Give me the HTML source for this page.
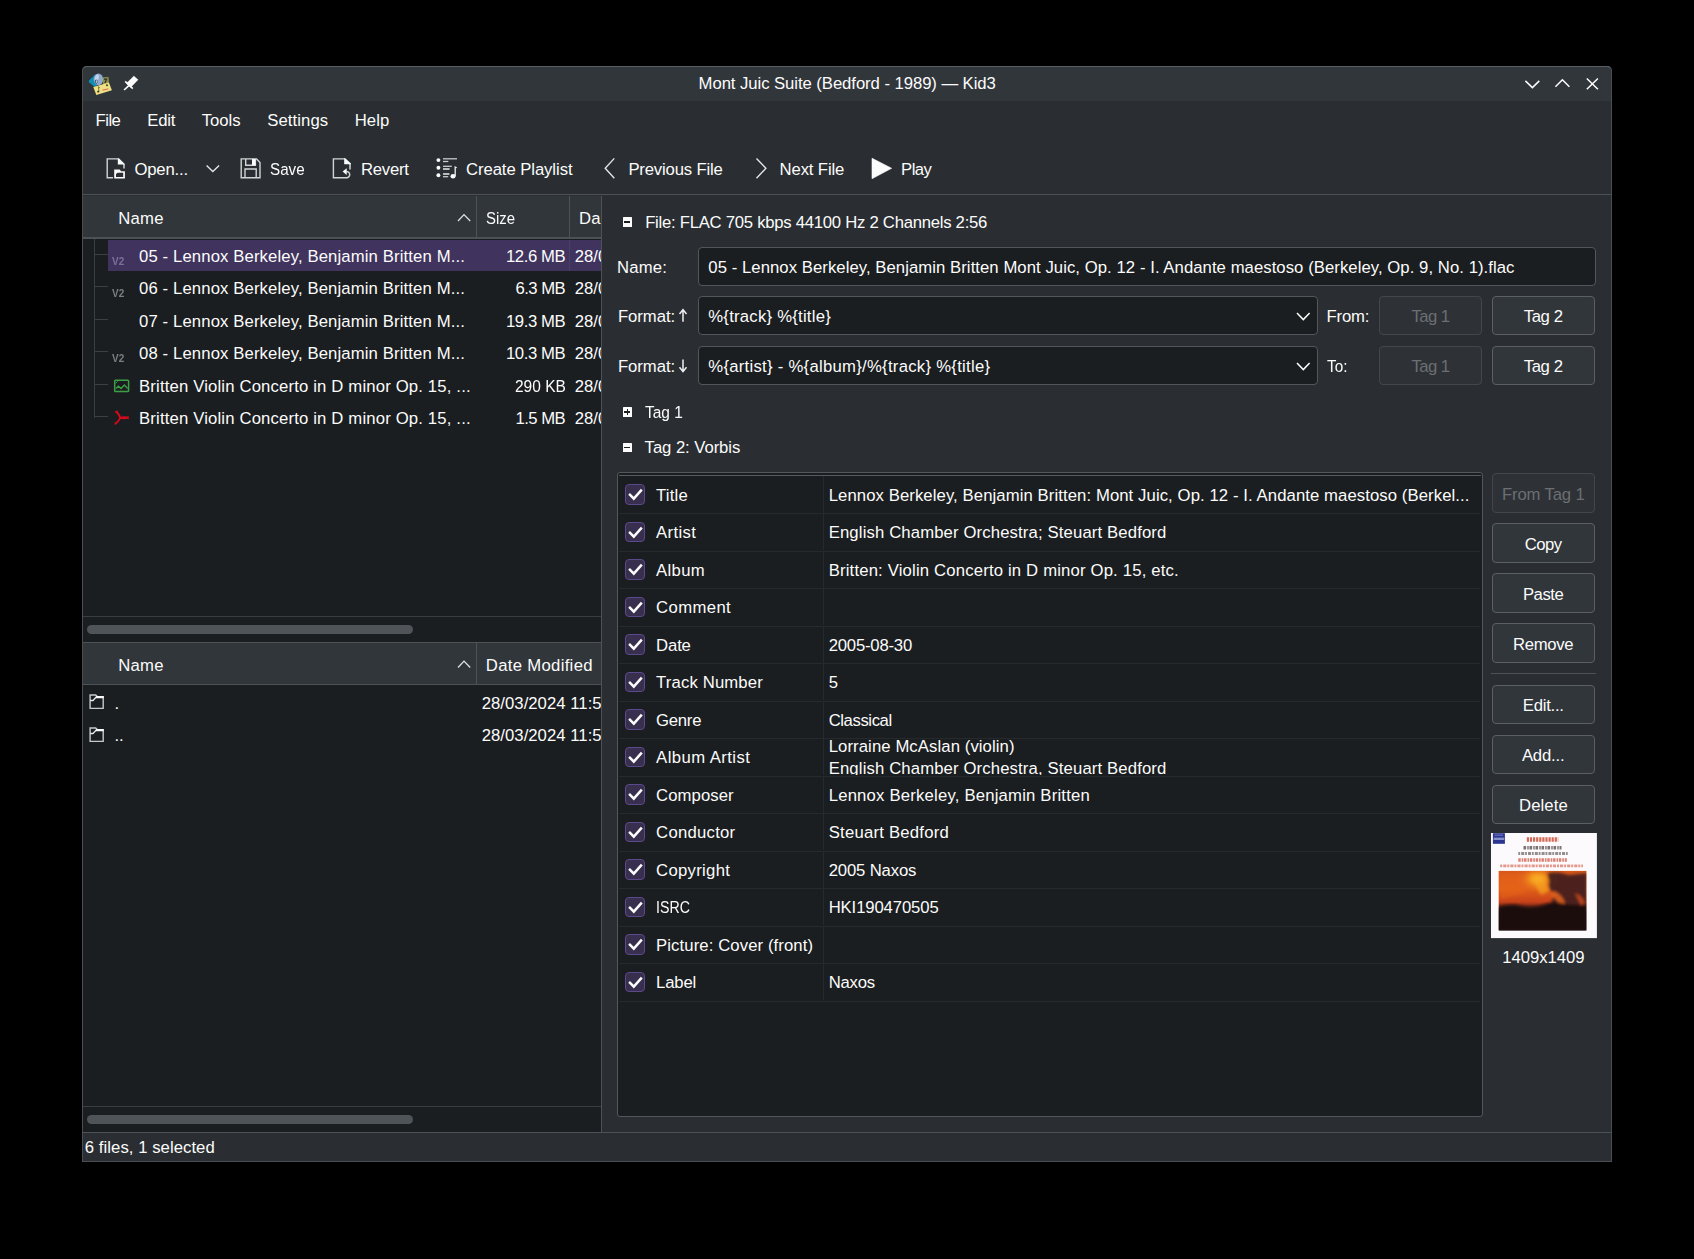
<!DOCTYPE html>
<html><head><meta charset="utf-8"><title>Kid3</title>
<style>
html,body{margin:0;padding:0;background:#000;}
body{width:1694px;height:1259px;position:relative;overflow:hidden;font-family:"Liberation Sans",sans-serif;}
.t{position:absolute;white-space:nowrap;font-family:"Liberation Sans",sans-serif;}
.r{position:absolute;box-sizing:border-box;}
svg{position:absolute;overflow:visible;}
.clip{position:absolute;overflow:hidden;}
</style></head><body>
<div class="r" style="left:82.00px;top:66.00px;width:1529.50px;height:1095.50px;background:#2a2e32;border-radius:5px 5px 0 0;"></div>
<div class="r" style="left:82.00px;top:66.00px;width:1529.50px;height:35.00px;background:#31363b;border-radius:5px 5px 0 0;border-top:1px solid #565b60;"></div>
<div class="r" style="left:82.00px;top:66.00px;width:1529.50px;height:1095.50px;border-radius:5px 5px 0 0;border:1px solid #4a4e52;border-top-color:#5a5f64;"></div>
<div class="t" style="left:698.60px;top:72.40px;height:24px;line-height:24px;font-size:16.7px;color:#fcfcfc;letter-spacing:-0.062px;">Mont Juic Suite (Bedford - 1989) — Kid3</div>
<div class="t" style="left:95.60px;top:109.40px;height:24px;line-height:24px;font-size:16.7px;color:#fcfcfc;letter-spacing:-0.529px;">File</div>
<div class="t" style="left:147.30px;top:109.40px;height:24px;line-height:24px;font-size:16.7px;color:#fcfcfc;letter-spacing:-0.203px;">Edit</div>
<div class="t" style="left:201.70px;top:109.40px;height:24px;line-height:24px;font-size:16.7px;color:#fcfcfc;letter-spacing:0.001px;">Tools</div>
<div class="t" style="left:267.20px;top:109.40px;height:24px;line-height:24px;font-size:16.7px;color:#fcfcfc;letter-spacing:0.090px;">Settings</div>
<div class="t" style="left:354.70px;top:109.40px;height:24px;line-height:24px;font-size:16.7px;color:#fcfcfc;letter-spacing:0.127px;">Help</div>
<div class="t" style="left:134.40px;top:157.60px;height:24px;line-height:24px;font-size:16.7px;color:#fcfcfc;letter-spacing:-0.163px;">Open...</div>
<div class="t" style="left:269.70px;top:157.60px;height:24px;line-height:24px;font-size:16.7px;color:#fcfcfc;transform:scaleX(0.9113);transform-origin:0 0;">Save</div>
<div class="t" style="left:361.10px;top:157.60px;height:24px;line-height:24px;font-size:16.7px;color:#fcfcfc;letter-spacing:-0.276px;">Revert</div>
<div class="t" style="left:466.00px;top:157.60px;height:24px;line-height:24px;font-size:16.7px;color:#fcfcfc;letter-spacing:-0.074px;">Create Playlist</div>
<div class="t" style="left:628.40px;top:157.60px;height:24px;line-height:24px;font-size:16.7px;color:#fcfcfc;letter-spacing:-0.169px;">Previous File</div>
<div class="t" style="left:779.60px;top:157.60px;height:24px;line-height:24px;font-size:16.7px;color:#fcfcfc;letter-spacing:-0.135px;">Next File</div>
<div class="t" style="left:901.10px;top:157.60px;height:24px;line-height:24px;font-size:16.7px;color:#fcfcfc;letter-spacing:-0.560px;">Play</div>
<div class="r" style="left:82.00px;top:194.20px;width:1529.50px;height:1.30px;background:#4d5256;"></div>
<div class="r" style="left:83.00px;top:195.50px;width:518.00px;height:421.00px;background:#1b1e20;"></div>
<div class="r" style="left:83.00px;top:195.50px;width:518.00px;height:42.00px;background:#31363b;"></div>
<div class="r" style="left:83.00px;top:237.30px;width:518.00px;height:1.40px;background:#4d5256;"></div>
<div class="r" style="left:475.70px;top:196.00px;width:1.20px;height:41.50px;background:#4d5256;"></div>
<div class="r" style="left:569.00px;top:196.00px;width:1.20px;height:41.50px;background:#4d5256;"></div>
<div class="t" style="left:118.30px;top:207.40px;height:24px;line-height:24px;font-size:16.7px;color:#fcfcfc;letter-spacing:0.204px;">Name</div>
<div class="t" style="left:485.50px;top:207.40px;height:24px;line-height:24px;font-size:16.7px;color:#fcfcfc;transform:scaleX(0.8928);transform-origin:0 0;">Size</div>
<div class="clip" style="left:570px;top:196px;width:31px;height:420px;">
<div class="t" style="left:8.90px;top:11.40px;height:24px;line-height:24px;font-size:16.7px;color:#fcfcfc;letter-spacing:0.330px;">Date Modified</div>
</div>
<div class="r" style="left:108.00px;top:239.60px;width:493.00px;height:31.70px;background:#40345e;"></div>
<div class="r" style="left:569.30px;top:239.60px;width:1.00px;height:31.70px;background:#4a3f66;"></div>
<div class="clip" style="left:83px;top:238.7px;width:518px;height:377px;">
<div class="t" style="left:56.00px;top:5.90px;height:24px;line-height:24px;font-size:16.7px;color:#fcfcfc;letter-spacing:0.124px;">05 - Lennox Berkeley, Benjamin Britten M...</div>
<div class="t" style="left:422.90px;top:5.90px;height:24px;line-height:24px;font-size:16.7px;color:#fcfcfc;letter-spacing:-0.385px;">12.6 MB</div>
<div class="t" style="left:491.70px;top:5.90px;height:24px;line-height:24px;font-size:16.7px;color:#fcfcfc;letter-spacing:0.037px;">28/03/2024 11:5</div>
<div class="t" style="left:56.00px;top:37.90px;height:24px;line-height:24px;font-size:16.7px;color:#fcfcfc;letter-spacing:0.124px;">06 - Lennox Berkeley, Benjamin Britten M...</div>
<div class="t" style="left:432.40px;top:37.90px;height:24px;line-height:24px;font-size:16.7px;color:#fcfcfc;letter-spacing:-0.508px;">6.3 MB</div>
<div class="t" style="left:491.70px;top:37.90px;height:24px;line-height:24px;font-size:16.7px;color:#fcfcfc;letter-spacing:0.037px;">28/03/2024 11:5</div>
<div class="t" style="left:56.00px;top:70.90px;height:24px;line-height:24px;font-size:16.7px;color:#fcfcfc;letter-spacing:0.124px;">07 - Lennox Berkeley, Benjamin Britten M...</div>
<div class="t" style="left:422.90px;top:70.90px;height:24px;line-height:24px;font-size:16.7px;color:#fcfcfc;letter-spacing:-0.385px;">19.3 MB</div>
<div class="t" style="left:491.70px;top:70.90px;height:24px;line-height:24px;font-size:16.7px;color:#fcfcfc;letter-spacing:0.037px;">28/03/2024 11:5</div>
<div class="t" style="left:56.00px;top:102.90px;height:24px;line-height:24px;font-size:16.7px;color:#fcfcfc;letter-spacing:0.124px;">08 - Lennox Berkeley, Benjamin Britten M...</div>
<div class="t" style="left:422.90px;top:102.90px;height:24px;line-height:24px;font-size:16.7px;color:#fcfcfc;letter-spacing:-0.385px;">10.3 MB</div>
<div class="t" style="left:491.70px;top:102.90px;height:24px;line-height:24px;font-size:16.7px;color:#fcfcfc;letter-spacing:0.037px;">28/03/2024 11:5</div>
<div class="t" style="left:56.00px;top:135.90px;height:24px;line-height:24px;font-size:16.7px;color:#fcfcfc;letter-spacing:0.161px;">Britten Violin Concerto in D minor Op. 15, ...</div>
<div class="t" style="left:431.90px;top:135.90px;height:24px;line-height:24px;font-size:16.7px;color:#fcfcfc;transform:scaleX(0.9292);transform-origin:0 0;">290 KB</div>
<div class="t" style="left:491.70px;top:135.90px;height:24px;line-height:24px;font-size:16.7px;color:#fcfcfc;letter-spacing:0.037px;">28/03/2024 11:5</div>
<div class="t" style="left:56.00px;top:167.90px;height:24px;line-height:24px;font-size:16.7px;color:#fcfcfc;letter-spacing:0.161px;">Britten Violin Concerto in D minor Op. 15, ...</div>
<div class="t" style="left:432.40px;top:167.90px;height:24px;line-height:24px;font-size:16.7px;color:#fcfcfc;letter-spacing:-0.508px;">1.5 MB</div>
<div class="t" style="left:491.70px;top:167.90px;height:24px;line-height:24px;font-size:16.7px;color:#fcfcfc;letter-spacing:0.037px;">28/03/2024 11:5</div>
</div>
<div class="r" style="left:93.60px;top:239.00px;width:1.40px;height:179.30px;background:#3c4043;"></div>
<div class="r" style="left:94.00px;top:254.00px;width:14.00px;height:1.40px;background:#3c4043;"></div>
<div class="r" style="left:94.00px;top:286.00px;width:13.50px;height:1.40px;background:#3c4043;"></div>
<div class="r" style="left:94.00px;top:319.00px;width:13.50px;height:1.40px;background:#3c4043;"></div>
<div class="r" style="left:94.00px;top:351.00px;width:13.50px;height:1.40px;background:#3c4043;"></div>
<div class="r" style="left:94.00px;top:384.00px;width:13.50px;height:1.40px;background:#3c4043;"></div>
<div class="r" style="left:94.00px;top:416.00px;width:13.50px;height:1.40px;background:#3c4043;"></div>
<div class="r" style="left:83.00px;top:615.60px;width:518.00px;height:1.20px;background:#3a3e42;"></div>
<div class="r" style="left:83.00px;top:616.80px;width:518.00px;height:25.20px;background:#1b1e20;"></div>
<div class="r" style="left:86.50px;top:624.50px;width:326.00px;height:9.60px;background:#4f5458;border-radius:5px;"></div>
<div class="r" style="left:83.00px;top:642.00px;width:518.00px;height:490.00px;background:#1b1e20;"></div>
<div class="r" style="left:83.00px;top:642.00px;width:518.00px;height:42.00px;background:#31363b;"></div>
<div class="r" style="left:83.00px;top:641.50px;width:518.00px;height:1.20px;background:#4d5256;"></div>
<div class="r" style="left:83.00px;top:683.80px;width:518.00px;height:1.40px;background:#4d5256;"></div>
<div class="r" style="left:475.70px;top:642.50px;width:1.20px;height:41.50px;background:#4d5256;"></div>
<div class="t" style="left:118.30px;top:654.20px;height:24px;line-height:24px;font-size:16.7px;color:#fcfcfc;letter-spacing:0.204px;">Name</div>
<div class="clip" style="left:477px;top:642px;width:124px;height:480px;">
<div class="t" style="left:8.80px;top:12.20px;height:24px;line-height:24px;font-size:16.7px;color:#fcfcfc;letter-spacing:0.313px;">Date Modified</div>
<div class="t" style="left:4.70px;top:49.60px;height:24px;line-height:24px;font-size:16.7px;color:#fcfcfc;letter-spacing:0.037px;">28/03/2024 11:5</div>
<div class="t" style="left:4.70px;top:82.40px;height:24px;line-height:24px;font-size:16.7px;color:#fcfcfc;letter-spacing:0.037px;">28/03/2024 11:5</div>
</div>
<div class="t" style="left:114.40px;top:691.60px;height:24px;line-height:24px;font-size:16.7px;color:#fcfcfc;">.</div>
<div class="t" style="left:114.40px;top:724.40px;height:24px;line-height:24px;font-size:16.7px;color:#fcfcfc;">..</div>
<div class="r" style="left:83.00px;top:1105.60px;width:518.00px;height:1.20px;background:#3a3e42;"></div>
<div class="r" style="left:86.50px;top:1114.90px;width:326.00px;height:9.60px;background:#4f5458;border-radius:5px;"></div>
<div class="r" style="left:601.00px;top:195.50px;width:1.20px;height:937.00px;background:#4d5256;"></div>
<div class="r" style="left:82.00px;top:1131.80px;width:1529.50px;height:1.20px;background:#4d5256;"></div>
<div class="t" style="left:84.80px;top:1135.90px;height:24px;line-height:24px;font-size:16.7px;color:#fcfcfc;letter-spacing:0.055px;">6 files, 1 selected</div>
<div class="r" style="left:622.70px;top:217.20px;width:9.40px;height:9.60px;background:#fcfcfc;border-radius:0.5px;"></div>
<div class="r" style="left:624.30px;top:221.10px;width:6.20px;height:1.80px;background:#1b1e20;"></div>
<div class="t" style="left:645.20px;top:210.70px;height:24px;line-height:24px;font-size:16.7px;color:#fcfcfc;letter-spacing:-0.263px;">File: FLAC 705 kbps 44100 Hz 2 Channels 2:56</div>
<div class="t" style="left:617.10px;top:255.60px;height:24px;line-height:24px;font-size:16.7px;color:#fcfcfc;letter-spacing:0.180px;">Name:</div>
<div class="r" style="left:698.00px;top:246.50px;width:897.80px;height:39.70px;background:#1b1e20;border:1.3px solid #53575b;border-radius:4px;"></div>
<div class="t" style="left:708.30px;top:255.60px;height:24px;line-height:24px;font-size:16.7px;color:#fcfcfc;letter-spacing:0.059px;">05 - Lennox Berkeley, Benjamin Britten Mont Juic, Op. 12 - I. Andante maestoso (Berkeley, Op. 9, No. 1).flac</div>
<div class="t" style="left:617.90px;top:304.80px;height:24px;line-height:24px;font-size:16.7px;color:#fcfcfc;letter-spacing:-0.039px;">Format:</div>
<div class="r" style="left:698.00px;top:295.60px;width:620.00px;height:39.70px;background:#1b1e20;border:1.3px solid #53575b;border-radius:4px;"></div>
<div class="t" style="left:708.30px;top:305.00px;height:24px;line-height:24px;font-size:16.7px;color:#fcfcfc;letter-spacing:0.230px;">%{track} %{title}</div>
<svg style="left:1295.00px;top:310.90px" width="16.60" height="10.60"><polyline points="2,2 8.30,8.60 14.60,2" fill="none" stroke="#fcfcfc" stroke-width="1.5"/></svg>
<div class="t" style="left:1326.50px;top:305.00px;height:24px;line-height:24px;font-size:16.7px;color:#fcfcfc;letter-spacing:-0.147px;">From:</div>
<div class="r" style="left:1379.30px;top:295.60px;width:102.90px;height:39.70px;background:#2e3236;border:1.3px solid #43474b;border-radius:4px;"></div>
<div class="t" style="left:1411.55px;top:305.05px;height:24px;line-height:24px;font-size:16.7px;color:#6b6f73;letter-spacing:-0.608px;">Tag 1</div>
<div class="r" style="left:1492.00px;top:295.60px;width:102.70px;height:39.70px;background:#31363b;border:1.3px solid #5c6064;border-radius:4px;"></div>
<div class="t" style="left:1523.70px;top:305.05px;height:24px;line-height:24px;font-size:16.7px;color:#fcfcfc;letter-spacing:-0.383px;">Tag 2</div>
<div class="t" style="left:617.90px;top:354.80px;height:24px;line-height:24px;font-size:16.7px;color:#fcfcfc;letter-spacing:-0.039px;">Format:</div>
<div class="r" style="left:698.00px;top:345.60px;width:620.00px;height:39.70px;background:#1b1e20;border:1.3px solid #53575b;border-radius:4px;"></div>
<div class="t" style="left:708.30px;top:355.00px;height:24px;line-height:24px;font-size:16.7px;color:#fcfcfc;letter-spacing:0.269px;">%{artist} - %{album}/%{track} %{title}</div>
<svg style="left:1295.00px;top:360.90px" width="16.60" height="10.60"><polyline points="2,2 8.30,8.60 14.60,2" fill="none" stroke="#fcfcfc" stroke-width="1.5"/></svg>
<div class="t" style="left:1326.50px;top:355.00px;height:24px;line-height:24px;font-size:16.7px;color:#fcfcfc;transform:scaleX(0.9195);transform-origin:0 0;">To:</div>
<div class="r" style="left:1379.30px;top:345.60px;width:102.90px;height:39.70px;background:#2e3236;border:1.3px solid #43474b;border-radius:4px;"></div>
<div class="t" style="left:1411.55px;top:355.05px;height:24px;line-height:24px;font-size:16.7px;color:#6b6f73;letter-spacing:-0.608px;">Tag 1</div>
<div class="r" style="left:1492.00px;top:345.60px;width:102.70px;height:39.70px;background:#31363b;border:1.3px solid #5c6064;border-radius:4px;"></div>
<div class="t" style="left:1523.70px;top:355.05px;height:24px;line-height:24px;font-size:16.7px;color:#fcfcfc;letter-spacing:-0.383px;">Tag 2</div>
<div class="r" style="left:622.70px;top:407.10px;width:9.40px;height:9.60px;background:#fcfcfc;border-radius:0.5px;"></div>
<div class="r" style="left:624.30px;top:411.00px;width:6.20px;height:1.80px;background:#1b1e20;"></div>
<div class="r" style="left:626.50px;top:408.80px;width:1.80px;height:6.20px;background:#1b1e20;"></div>
<div class="t" style="left:644.60px;top:401.20px;height:24px;line-height:24px;font-size:16.7px;color:#fcfcfc;transform:scaleX(0.9282);transform-origin:0 0;">Tag 1</div>
<div class="r" style="left:622.70px;top:442.60px;width:9.40px;height:9.60px;background:#fcfcfc;border-radius:0.5px;"></div>
<div class="r" style="left:624.30px;top:446.50px;width:6.20px;height:1.80px;background:#1b1e20;"></div>
<div class="t" style="left:644.60px;top:436.40px;height:24px;line-height:24px;font-size:16.7px;color:#fcfcfc;letter-spacing:-0.061px;">Tag 2: Vorbis</div>
<div class="r" style="left:617.20px;top:472.20px;width:865.60px;height:644.60px;background:#1b1e20;border:1.3px solid #53575b;border-radius:3px;"></div>
<div class="r" style="left:619.40px;top:474.70px;width:861.20px;height:1.60px;background:#565b5f;"></div>
<div class="r" style="left:618.70px;top:513.10px;width:861.10px;height:1.40px;background:#262a2d;"></div>
<div class="r" style="left:822.90px;top:476.00px;width:1.20px;height:36.80px;background:#262a2d;"></div>
<div class="r" style="left:625.40px;top:484.20px;width:20.10px;height:20.40px;background:#382e4e;border:1.7px solid #5c488c;border-radius:4px;"></div>
<svg style="left:625.40px;top:484.20px" width="21" height="21"><polyline points="4.1,9.9 8.8,14.6 16.8,5.6" fill="none" stroke="#fcfcfc" stroke-width="2.5"/></svg>
<div class="t" style="left:656.10px;top:483.70px;height:24px;line-height:24px;font-size:16.7px;color:#fcfcfc;letter-spacing:0.176px;">Title</div>
<div class="t" style="left:828.70px;top:483.70px;height:24px;line-height:24px;font-size:16.7px;color:#fcfcfc;letter-spacing:0.090px;">Lennox Berkeley, Benjamin Britten: Mont Juic, Op. 12 - I. Andante maestoso (Berkel...</div>
<div class="r" style="left:618.70px;top:550.60px;width:861.10px;height:1.40px;background:#262a2d;"></div>
<div class="r" style="left:822.90px;top:513.50px;width:1.20px;height:36.80px;background:#262a2d;"></div>
<div class="r" style="left:625.40px;top:521.70px;width:20.10px;height:20.40px;background:#382e4e;border:1.7px solid #5c488c;border-radius:4px;"></div>
<svg style="left:625.40px;top:521.70px" width="21" height="21"><polyline points="4.1,9.9 8.8,14.6 16.8,5.6" fill="none" stroke="#fcfcfc" stroke-width="2.5"/></svg>
<div class="t" style="left:656.10px;top:521.20px;height:24px;line-height:24px;font-size:16.7px;color:#fcfcfc;letter-spacing:0.345px;">Artist</div>
<div class="t" style="left:828.70px;top:521.20px;height:24px;line-height:24px;font-size:16.7px;color:#fcfcfc;letter-spacing:0.136px;">English Chamber Orchestra; Steuart Bedford</div>
<div class="r" style="left:618.70px;top:588.10px;width:861.10px;height:1.40px;background:#262a2d;"></div>
<div class="r" style="left:822.90px;top:551.00px;width:1.20px;height:36.80px;background:#262a2d;"></div>
<div class="r" style="left:625.40px;top:559.20px;width:20.10px;height:20.40px;background:#382e4e;border:1.7px solid #5c488c;border-radius:4px;"></div>
<svg style="left:625.40px;top:559.20px" width="21" height="21"><polyline points="4.1,9.9 8.8,14.6 16.8,5.6" fill="none" stroke="#fcfcfc" stroke-width="2.5"/></svg>
<div class="t" style="left:656.10px;top:558.70px;height:24px;line-height:24px;font-size:16.7px;color:#fcfcfc;letter-spacing:0.339px;">Album</div>
<div class="t" style="left:828.70px;top:558.70px;height:24px;line-height:24px;font-size:16.7px;color:#fcfcfc;letter-spacing:0.171px;">Britten: Violin Concerto in D minor Op. 15, etc.</div>
<div class="r" style="left:618.70px;top:625.60px;width:861.10px;height:1.40px;background:#262a2d;"></div>
<div class="r" style="left:822.90px;top:588.50px;width:1.20px;height:36.80px;background:#262a2d;"></div>
<div class="r" style="left:625.40px;top:596.70px;width:20.10px;height:20.40px;background:#382e4e;border:1.7px solid #5c488c;border-radius:4px;"></div>
<svg style="left:625.40px;top:596.70px" width="21" height="21"><polyline points="4.1,9.9 8.8,14.6 16.8,5.6" fill="none" stroke="#fcfcfc" stroke-width="2.5"/></svg>
<div class="t" style="left:656.10px;top:596.20px;height:24px;line-height:24px;font-size:16.7px;color:#fcfcfc;letter-spacing:0.384px;">Comment</div>
<div class="r" style="left:618.70px;top:663.10px;width:861.10px;height:1.40px;background:#262a2d;"></div>
<div class="r" style="left:822.90px;top:626.00px;width:1.20px;height:36.80px;background:#262a2d;"></div>
<div class="r" style="left:625.40px;top:634.20px;width:20.10px;height:20.40px;background:#382e4e;border:1.7px solid #5c488c;border-radius:4px;"></div>
<svg style="left:625.40px;top:634.20px" width="21" height="21"><polyline points="4.1,9.9 8.8,14.6 16.8,5.6" fill="none" stroke="#fcfcfc" stroke-width="2.5"/></svg>
<div class="t" style="left:656.10px;top:633.70px;height:24px;line-height:24px;font-size:16.7px;color:#fcfcfc;letter-spacing:-0.146px;">Date</div>
<div class="t" style="left:828.70px;top:633.70px;height:24px;line-height:24px;font-size:16.7px;color:#fcfcfc;letter-spacing:-0.202px;">2005-08-30</div>
<div class="r" style="left:618.70px;top:700.60px;width:861.10px;height:1.40px;background:#262a2d;"></div>
<div class="r" style="left:822.90px;top:663.50px;width:1.20px;height:36.80px;background:#262a2d;"></div>
<div class="r" style="left:625.40px;top:671.70px;width:20.10px;height:20.40px;background:#382e4e;border:1.7px solid #5c488c;border-radius:4px;"></div>
<svg style="left:625.40px;top:671.70px" width="21" height="21"><polyline points="4.1,9.9 8.8,14.6 16.8,5.6" fill="none" stroke="#fcfcfc" stroke-width="2.5"/></svg>
<div class="t" style="left:656.10px;top:671.20px;height:24px;line-height:24px;font-size:16.7px;color:#fcfcfc;letter-spacing:0.145px;">Track Number</div>
<div class="t" style="left:828.70px;top:671.20px;height:24px;line-height:24px;font-size:16.7px;color:#fcfcfc;letter-spacing:-0.968px;">5</div>
<div class="r" style="left:618.70px;top:738.10px;width:861.10px;height:1.40px;background:#262a2d;"></div>
<div class="r" style="left:822.90px;top:701.00px;width:1.20px;height:36.80px;background:#262a2d;"></div>
<div class="r" style="left:625.40px;top:709.20px;width:20.10px;height:20.40px;background:#382e4e;border:1.7px solid #5c488c;border-radius:4px;"></div>
<svg style="left:625.40px;top:709.20px" width="21" height="21"><polyline points="4.1,9.9 8.8,14.6 16.8,5.6" fill="none" stroke="#fcfcfc" stroke-width="2.5"/></svg>
<div class="t" style="left:656.10px;top:708.70px;height:24px;line-height:24px;font-size:16.7px;color:#fcfcfc;letter-spacing:-0.256px;">Genre</div>
<div class="t" style="left:828.70px;top:708.70px;height:24px;line-height:24px;font-size:16.7px;color:#fcfcfc;letter-spacing:-0.412px;">Classical</div>
<div class="r" style="left:618.70px;top:775.60px;width:861.10px;height:1.40px;background:#262a2d;"></div>
<div class="r" style="left:822.90px;top:738.50px;width:1.20px;height:36.80px;background:#262a2d;"></div>
<div class="r" style="left:625.40px;top:746.70px;width:20.10px;height:20.40px;background:#382e4e;border:1.7px solid #5c488c;border-radius:4px;"></div>
<svg style="left:625.40px;top:746.70px" width="21" height="21"><polyline points="4.1,9.9 8.8,14.6 16.8,5.6" fill="none" stroke="#fcfcfc" stroke-width="2.5"/></svg>
<div class="t" style="left:656.10px;top:746.20px;height:24px;line-height:24px;font-size:16.7px;color:#fcfcfc;letter-spacing:0.428px;">Album Artist</div>
<div class="clip" style="left:824px;top:738.60px;width:656px;height:36.6px;">
<div class="t" style="left:4.70px;top:-3.60px;height:24px;line-height:24px;font-size:16.7px;color:#fcfcfc;letter-spacing:0.092px;">Lorraine McAslan (violin)</div>
<div class="t" style="left:4.70px;top:18.70px;height:24px;line-height:24px;font-size:16.7px;color:#fcfcfc;letter-spacing:0.136px;">English Chamber Orchestra, Steuart Bedford</div>
</div>
<div class="r" style="left:618.70px;top:813.10px;width:861.10px;height:1.40px;background:#262a2d;"></div>
<div class="r" style="left:822.90px;top:776.00px;width:1.20px;height:36.80px;background:#262a2d;"></div>
<div class="r" style="left:625.40px;top:784.20px;width:20.10px;height:20.40px;background:#382e4e;border:1.7px solid #5c488c;border-radius:4px;"></div>
<svg style="left:625.40px;top:784.20px" width="21" height="21"><polyline points="4.1,9.9 8.8,14.6 16.8,5.6" fill="none" stroke="#fcfcfc" stroke-width="2.5"/></svg>
<div class="t" style="left:656.10px;top:783.70px;height:24px;line-height:24px;font-size:16.7px;color:#fcfcfc;letter-spacing:0.076px;">Composer</div>
<div class="t" style="left:828.70px;top:783.70px;height:24px;line-height:24px;font-size:16.7px;color:#fcfcfc;letter-spacing:0.197px;">Lennox Berkeley, Benjamin Britten</div>
<div class="r" style="left:618.70px;top:850.60px;width:861.10px;height:1.40px;background:#262a2d;"></div>
<div class="r" style="left:822.90px;top:813.50px;width:1.20px;height:36.80px;background:#262a2d;"></div>
<div class="r" style="left:625.40px;top:821.70px;width:20.10px;height:20.40px;background:#382e4e;border:1.7px solid #5c488c;border-radius:4px;"></div>
<svg style="left:625.40px;top:821.70px" width="21" height="21"><polyline points="4.1,9.9 8.8,14.6 16.8,5.6" fill="none" stroke="#fcfcfc" stroke-width="2.5"/></svg>
<div class="t" style="left:656.10px;top:821.20px;height:24px;line-height:24px;font-size:16.7px;color:#fcfcfc;letter-spacing:0.254px;">Conductor</div>
<div class="t" style="left:828.70px;top:821.20px;height:24px;line-height:24px;font-size:16.7px;color:#fcfcfc;letter-spacing:0.230px;">Steuart Bedford</div>
<div class="r" style="left:618.70px;top:888.10px;width:861.10px;height:1.40px;background:#262a2d;"></div>
<div class="r" style="left:822.90px;top:851.00px;width:1.20px;height:36.80px;background:#262a2d;"></div>
<div class="r" style="left:625.40px;top:859.20px;width:20.10px;height:20.40px;background:#382e4e;border:1.7px solid #5c488c;border-radius:4px;"></div>
<svg style="left:625.40px;top:859.20px" width="21" height="21"><polyline points="4.1,9.9 8.8,14.6 16.8,5.6" fill="none" stroke="#fcfcfc" stroke-width="2.5"/></svg>
<div class="t" style="left:656.10px;top:858.70px;height:24px;line-height:24px;font-size:16.7px;color:#fcfcfc;letter-spacing:0.290px;">Copyright</div>
<div class="t" style="left:828.70px;top:858.70px;height:24px;line-height:24px;font-size:16.7px;color:#fcfcfc;letter-spacing:-0.155px;">2005 Naxos</div>
<div class="r" style="left:618.70px;top:925.60px;width:861.10px;height:1.40px;background:#262a2d;"></div>
<div class="r" style="left:822.90px;top:888.50px;width:1.20px;height:36.80px;background:#262a2d;"></div>
<div class="r" style="left:625.40px;top:896.70px;width:20.10px;height:20.40px;background:#382e4e;border:1.7px solid #5c488c;border-radius:4px;"></div>
<svg style="left:625.40px;top:896.70px" width="21" height="21"><polyline points="4.1,9.9 8.8,14.6 16.8,5.6" fill="none" stroke="#fcfcfc" stroke-width="2.5"/></svg>
<div class="t" style="left:656.10px;top:896.20px;height:24px;line-height:24px;font-size:16.7px;color:#fcfcfc;transform:scaleX(0.8493);transform-origin:0 0;">ISRC</div>
<div class="t" style="left:828.70px;top:896.20px;height:24px;line-height:24px;font-size:16.7px;color:#fcfcfc;letter-spacing:-0.125px;">HKI190470505</div>
<div class="r" style="left:618.70px;top:963.10px;width:861.10px;height:1.40px;background:#262a2d;"></div>
<div class="r" style="left:822.90px;top:926.00px;width:1.20px;height:36.80px;background:#262a2d;"></div>
<div class="r" style="left:625.40px;top:934.20px;width:20.10px;height:20.40px;background:#382e4e;border:1.7px solid #5c488c;border-radius:4px;"></div>
<svg style="left:625.40px;top:934.20px" width="21" height="21"><polyline points="4.1,9.9 8.8,14.6 16.8,5.6" fill="none" stroke="#fcfcfc" stroke-width="2.5"/></svg>
<div class="t" style="left:656.10px;top:933.70px;height:24px;line-height:24px;font-size:16.7px;color:#fcfcfc;letter-spacing:0.096px;">Picture: Cover (front)</div>
<div class="r" style="left:618.70px;top:1000.60px;width:861.10px;height:1.40px;background:#262a2d;"></div>
<div class="r" style="left:822.90px;top:963.50px;width:1.20px;height:36.80px;background:#262a2d;"></div>
<div class="r" style="left:625.40px;top:971.70px;width:20.10px;height:20.40px;background:#382e4e;border:1.7px solid #5c488c;border-radius:4px;"></div>
<svg style="left:625.40px;top:971.70px" width="21" height="21"><polyline points="4.1,9.9 8.8,14.6 16.8,5.6" fill="none" stroke="#fcfcfc" stroke-width="2.5"/></svg>
<div class="t" style="left:656.10px;top:971.20px;height:24px;line-height:24px;font-size:16.7px;color:#fcfcfc;letter-spacing:-0.183px;">Label</div>
<div class="t" style="left:828.70px;top:971.20px;height:24px;line-height:24px;font-size:16.7px;color:#fcfcfc;letter-spacing:-0.236px;">Naxos</div>
<div class="r" style="left:1492.00px;top:473.00px;width:102.70px;height:39.80px;background:#2e3236;border:1.3px solid #43474b;border-radius:4px;"></div>
<div class="t" style="left:1501.95px;top:482.50px;height:24px;line-height:24px;font-size:16.7px;color:#6b6f73;letter-spacing:-0.152px;">From Tag 1</div>
<div class="r" style="left:1492.00px;top:523.00px;width:102.70px;height:39.80px;background:#31363b;border:1.3px solid #5c6064;border-radius:4px;"></div>
<div class="t" style="left:1524.65px;top:532.50px;height:24px;line-height:24px;font-size:16.7px;color:#fcfcfc;letter-spacing:-0.531px;">Copy</div>
<div class="r" style="left:1492.00px;top:573.00px;width:102.70px;height:39.80px;background:#31363b;border:1.3px solid #5c6064;border-radius:4px;"></div>
<div class="t" style="left:1522.95px;top:582.50px;height:24px;line-height:24px;font-size:16.7px;color:#fcfcfc;letter-spacing:-0.467px;">Paste</div>
<div class="r" style="left:1492.00px;top:623.00px;width:102.70px;height:39.80px;background:#31363b;border:1.3px solid #5c6064;border-radius:4px;"></div>
<div class="t" style="left:1513.10px;top:632.50px;height:24px;line-height:24px;font-size:16.7px;color:#fcfcfc;letter-spacing:-0.342px;">Remove</div>
<div class="r" style="left:1491.30px;top:673.00px;width:105.00px;height:1.30px;background:#4d5256;"></div>
<div class="r" style="left:1492.00px;top:684.60px;width:102.70px;height:39.60px;background:#31363b;border:1.3px solid #5c6064;border-radius:4px;"></div>
<div class="t" style="left:1522.80px;top:694.00px;height:24px;line-height:24px;font-size:16.7px;color:#fcfcfc;letter-spacing:-0.261px;">Edit...</div>
<div class="r" style="left:1492.00px;top:734.60px;width:102.70px;height:39.60px;background:#31363b;border:1.3px solid #5c6064;border-radius:4px;"></div>
<div class="t" style="left:1521.90px;top:744.00px;height:24px;line-height:24px;font-size:16.7px;color:#fcfcfc;letter-spacing:-0.154px;">Add...</div>
<div class="r" style="left:1492.00px;top:784.60px;width:102.70px;height:39.60px;background:#31363b;border:1.3px solid #5c6064;border-radius:4px;"></div>
<div class="t" style="left:1519.00px;top:794.00px;height:24px;line-height:24px;font-size:16.7px;color:#fcfcfc;letter-spacing:0.087px;">Delete</div>
<div class="t" style="left:1502.30px;top:946.30px;height:24px;line-height:24px;font-size:16.7px;color:#fcfcfc;letter-spacing:-0.046px;">1409x1409</div>
<svg style="left:1491.1px;top:832.9px" width="106" height="106"><defs><linearGradient id="sky" x1="0" y1="0" x2="0" y2="1"><stop offset="0" stop-color="#d8581a"/><stop offset="0.30" stop-color="#e2601a"/><stop offset="0.52" stop-color="#c8421a"/><stop offset="0.62" stop-color="#5a2216"/><stop offset="0.72" stop-color="#24120e"/><stop offset="1" stop-color="#160b09"/></linearGradient><radialGradient id="sun" cx="0.5" cy="0.5" r="0.5"><stop offset="0" stop-color="#ffd23a"/><stop offset="0.35" stop-color="#f79a1c" stop-opacity="0.9"/><stop offset="1" stop-color="#e2601a" stop-opacity="0"/></radialGradient><filter id="b1" x="-20%" y="-20%" width="140%" height="140%"><feGaussianBlur stdDeviation="1.6"/></filter><filter id="b2" x="-20%" y="-20%" width="140%" height="140%"><feGaussianBlur stdDeviation="0.5"/></filter><clipPath id="pic"><rect x="7.7" y="37.9" width="87.7" height="59.6"/></clipPath></defs><rect x="0" y="0" width="105.9" height="105.1" fill="#fcfafc"/><rect x="1.9" y="0.2" width="12.0" height="10.6" fill="#2c3590"/><rect x="2.6" y="4.6" width="10.6" height="2.4" fill="#8f9bd0" opacity="0.9"/><rect x="3.4" y="1.4" width="8.6" height="1.6" fill="#6670b8" opacity="0.8"/><g filter="url(#b2)"><line x1="35.8" y1="6.5" x2="67.3" y2="6.5" stroke="#c8452c" stroke-width="4.4" stroke-dasharray="2.2 0.9" opacity="0.8"/><line x1="32.5" y1="14.700000000000001" x2="70.5" y2="14.700000000000001" stroke="#2a2020" stroke-width="3.6" stroke-dasharray="2.6 1.2 1.4 0.8" opacity="0.62"/><line x1="27.3" y1="20.5" x2="77.7" y2="20.5" stroke="#2a2020" stroke-width="2.8" stroke-dasharray="1.8 1.1 3 0.9" opacity="0.5"/><line x1="27.3" y1="27.0" x2="75.8" y2="27.0" stroke="#c8402a" stroke-width="3.6" stroke-dasharray="2.4 1.0 1.6 0.8" opacity="0.66"/><line x1="9.2" y1="32.8" x2="92.0" y2="32.8" stroke="#cf4a30" stroke-width="2.8" stroke-dasharray="2.0 1.0 3.2 0.9" opacity="0.55"/></g><rect x="7.7" y="37.9" width="87.7" height="59.6" fill="url(#sky)"/><g clip-path="url(#pic)"><g filter="url(#b1)"><ellipse cx="47" cy="46" rx="22" ry="14" fill="url(#sun)"/><path d="M40,40 L52,44 L58,58 L50,62 L44,52 Z" fill="#f6a21e" opacity="0.7"/><path d="M56,40 Q66,38 78,42 L96,40 L96,80 L60,80 Q58,70 64,62 Q56,56 58,48 Z" fill="#45201a" opacity="0.95"/><path d="M62,58 Q70,60 74,70 L70,74 Q66,66 60,62 Z" fill="#e8661c" opacity="0.85"/><path d="M84,60 Q90,62 94,70 L90,72 Z" fill="#d8501c" opacity="0.8"/><path d="M7,74 Q20,70 30,73 T52,72 T70,70 T96,72 L96,98 L7,98 Z" fill="#1e0f0c"/><path d="M8,42 L30,40 L34,60 L10,66 Z" fill="#e8641c" opacity="0.5"/></g></g></svg>
<svg width="1694" height="1259" style="left:0;top:0;pointer-events:none"><path d="M1525.4,80.9 L1532.4,87.6 L1539.3,80.9" fill="none" stroke="#fcfcfc" stroke-width="1.5" />
<path d="M1555.4,86.8 L1562.4,79.8 L1569.4,86.8" fill="none" stroke="#fcfcfc" stroke-width="1.5" />
<path d="M1586.8,78.5 L1597.9,89.3 M1597.9,78.5 L1586.8,89.3" fill="none" stroke="#fcfcfc" stroke-width="1.5" />
<path d="M133.9,76.0 L138.1,79.7 L130.6,87.4 L126.3,83.4 Z" fill="#fcfcfc" stroke="#fcfcfc" stroke-width="0.3" stroke-linejoin="round"/>
<path d="M125.2,81.3 L132.8,88.6" fill="none" stroke="#fcfcfc" stroke-width="1.6" />
<path d="M128.8,85.6 L124.1,90.0" fill="none" stroke="#fcfcfc" stroke-width="1.6" />
<path d="M88.7,82.0 Q88.4,80.6 90.2,79.2 L95.2,74.6 L97.5,75.5 L96.5,86.4 L94.0,86.6 Z" fill="#0d8fb0" />
<ellipse cx="98.4" cy="79.4" rx="4.7" ry="5.9" fill="#8fa9cf"/>
<ellipse cx="96.8" cy="78.0" rx="1.9" ry="3.6" fill="#c3d3e8" transform="rotate(14 96.8 78)"/>
<ellipse cx="96.3" cy="81.6" rx="1.5" ry="2.1" fill="#3a5078"/>
<ellipse cx="96.6" cy="81.6" rx="0.8" ry="1.4" fill="#b5c6df"/>
<path d="M103.0,77.2 L108.6,77.0 L109.0,84.0 L103.0,84.6 Z" fill="#8e8f49" />
<path d="M104.0,78.6 L107.4,78.6 L105.6,83.2 L104.4,82.8 L105.8,79.8 L104.0,79.8 Z" fill="#2b2e2a" />
<path d="M93.3,86.9 L108.9,82.5 L111.9,90.2 L96.3,94.9 Z" fill="#eee083" />
<circle cx="107.0" cy="85.3" r="1.0" fill="#3a3d22"/>
<ellipse cx="98.3" cy="91.6" rx="1.1" ry="0.9" fill="#2e2e18" transform="rotate(-30 98.3 91.6)"/>
<path d="M98.9,91.2 L98.3,86.6 L100.0,88.2" fill="none" stroke="#55552c" stroke-width="0.7" />
<path d="M102.4,90.1 L108.4,88.9" fill="none" stroke="#e06a5a" stroke-width="1.0" />
<path d="M113.0,177.8 H107.2 V158.9 H118.4" fill="none" stroke="#d2d4d5" stroke-width="1.4" />
<path d="M124.0,164.0 V168.6" fill="none" stroke="#d2d4d5" stroke-width="1.5" />
<path d="M117.8,158.2 L118.9,158.2 L124.8,163.9 L124.8,164.6 L117.8,164.6 Z" fill="#fcfcfc" />
<path d="M114.2,169.6 H119.6 L121.2,171.3 H124.9 V178.6 H114.2 Z" fill="#fcfcfc" />
<path d="M116.0,177.0 V174.0 L117.6,172.8 H123.2 V177.0 Z" fill="#2a2e32" />
<path d="M206.6,165.4 L212.8,171.6 L219.1,165.4" fill="none" stroke="#e4e5e6" stroke-width="1.4" />
<path d="M241.2,158.9 H256.6 L260.0,162.5 V177.8 H241.2 Z" fill="none" stroke="#d2d4d5" stroke-width="1.4" />
<path d="M245.7,159 V165.3 H255.4 V159" fill="none" stroke="#d2d4d5" stroke-width="1.4" />
<path d="M252.0,159 H255.4 V165.3 H252.0 Z" fill="#fcfcfc" />
<path d="M245.0,177.8 V169.0 H256.2 V177.8" fill="none" stroke="#d2d4d5" stroke-width="1.4" />
<path d="M347.0,177.8 H333.4 V158.9 H345.0" fill="none" stroke="#d2d4d5" stroke-width="1.4" />
<path d="M350.0,163.6 V169.4" fill="none" stroke="#d2d4d5" stroke-width="1.5" />
<path d="M344.2,158.2 L345.3,158.2 L351.0,163.6 L351.0,164.3 L344.2,164.3 Z" fill="#fcfcfc" />
<path d="M346.4,171.4 A3.2,3.2 0 1 1 346.6,177.8" fill="none" stroke="#d2d4d5" stroke-width="1.5" />
<path d="M342.6,171.5 L346.7,168.2 L346.7,174.9 Z" fill="#fcfcfc" />
<circle cx="438.4" cy="160.1" r="1.95" fill="#fcfcfc"/>
<circle cx="438.4" cy="167.7" r="1.95" fill="#fcfcfc"/>
<circle cx="438.4" cy="175.3" r="1.95" fill="#fcfcfc"/>
<path d="M443,158.8 H457" fill="none" stroke="#c9cbcc" stroke-width="1.3" />
<path d="M443,161.5 H448.3" fill="none" stroke="#c9cbcc" stroke-width="1.3" />
<path d="M443,166.3 H451.8" fill="none" stroke="#c9cbcc" stroke-width="1.3" />
<path d="M443,169.0 H449.6" fill="none" stroke="#c9cbcc" stroke-width="1.8" />
<path d="M443,174.0 H449.4" fill="none" stroke="#c9cbcc" stroke-width="1.8" />
<path d="M443,176.7 H448.2" fill="none" stroke="#c9cbcc" stroke-width="1.3" />
<ellipse cx="453.0" cy="176.3" rx="2.5" ry="2.3" fill="#fcfcfc"/>
<path d="M455.2,176.3 V167.0 L456.7,167.8" fill="none" stroke="#eceded" stroke-width="1.3" />
<path d="M614.3,158.4 L605.2,168.3 L614.3,178.3" fill="none" stroke="#e4e5e6" stroke-width="1.4" />
<path d="M756.5,158.4 L765.9,168.3 L756.5,178.3" fill="none" stroke="#e4e5e6" stroke-width="1.4" />
<path d="M872.0,158.2 L891.6,168.3 L872.0,178.7 Z" fill="#fcfcfc" stroke="#fcfcfc" stroke-width="0.6" stroke-linejoin="round"/>
<path d="M458.0,221.0 L464.0,214.6 L470.2,221.0" fill="none" stroke="#dfe0e1" stroke-width="1.3" />
<path d="M458.0,667.5 L464.0,661.1 L470.2,667.5" fill="none" stroke="#dfe0e1" stroke-width="1.3" />
<rect x="114.7" y="380.2" width="13.9" height="11.4" fill="none" stroke="#3d9e45" stroke-width="1.5" rx="0.8"/>
<path d="M116.0,388.6 L118.4,386.2 L121.0,388.5 L124.4,385.0 L127.6,388.4" fill="none" stroke="#3d9e45" stroke-width="1.4" />
<path d="M115.6,383.4 L117.6,381.2" fill="none" stroke="#3d9e45" stroke-width="0.9" />
<path d="M116.0,411.4 Q119.6,414.0 120.2,417.9 Q124.0,416.4 128.2,417.7 Q124.0,418.9 120.2,417.9 Q118.4,422.0 115.4,423.8 Q119.4,420.6 120.2,417.9 Q118.8,414.2 116.0,411.4" fill="none" stroke="#d40a1c" stroke-width="1.7" stroke-linejoin="round"/>
<path d="M115.0,410.9 L116.6,413.2 M117.6,410.6 L117.2,412.8" fill="none" stroke="#d40a1c" stroke-width="1.0" />
<path d="M128.6,416.4 L126.6,417.6 L128.6,419.0" fill="none" stroke="#d40a1c" stroke-width="1.0" />
<path d="M114.6,422.6 L116.2,423.2 L115.6,424.6" fill="none" stroke="#d40a1c" stroke-width="1.0" />
<path d="M90.1,695.0 H95.69999999999999 L97.5,696.6999999999999 H103.19999999999999 V708.4 H90.1 Z" fill="none" stroke="#c6c8c9" stroke-width="1.4" />
<path d="M96.0,695.9 L103.69999999999999,695.9 V698.3 H95.1 Z" fill="#fcfcfc" />
<path d="M90.1,700.5 H93.0 L96.1,697.0999999999999" fill="none" stroke="#e6e7e8" stroke-width="1.4" />
<path d="M90.1,728.0 H95.69999999999999 L97.5,729.6999999999999 H103.19999999999999 V741.4 H90.1 Z" fill="none" stroke="#c6c8c9" stroke-width="1.4" />
<path d="M96.0,728.9 L103.69999999999999,728.9 V731.3 H95.1 Z" fill="#fcfcfc" />
<path d="M90.1,733.5 H93.0 L96.1,730.0999999999999" fill="none" stroke="#e6e7e8" stroke-width="1.4" />
<path d="M683.0,309.8 V321.8 M679.5,314.0 L683.0,309.6 L686.5,314.0" fill="none" stroke="#f0f1f1" stroke-width="1.5" />
<path d="M683.0,359.4 V371.4 M679.5,367.3 L683.0,371.6 L686.5,367.3" fill="none" stroke="#f0f1f1" stroke-width="1.5" /></svg>
<div class="t" style="left:112.30px;top:249.30px;height:24px;line-height:24px;font-size:11.4px;color:#7d6f9c;font-weight:bold;transform:scaleX(0.8736);transform-origin:0 0;">V2</div>
<div class="t" style="left:112.30px;top:281.30px;height:24px;line-height:24px;font-size:11.4px;color:#7d7f81;font-weight:bold;transform:scaleX(0.8736);transform-origin:0 0;">V2</div>
<div class="t" style="left:112.30px;top:346.30px;height:24px;line-height:24px;font-size:11.4px;color:#7d7f81;font-weight:bold;transform:scaleX(0.8736);transform-origin:0 0;">V2</div>
</body></html>
